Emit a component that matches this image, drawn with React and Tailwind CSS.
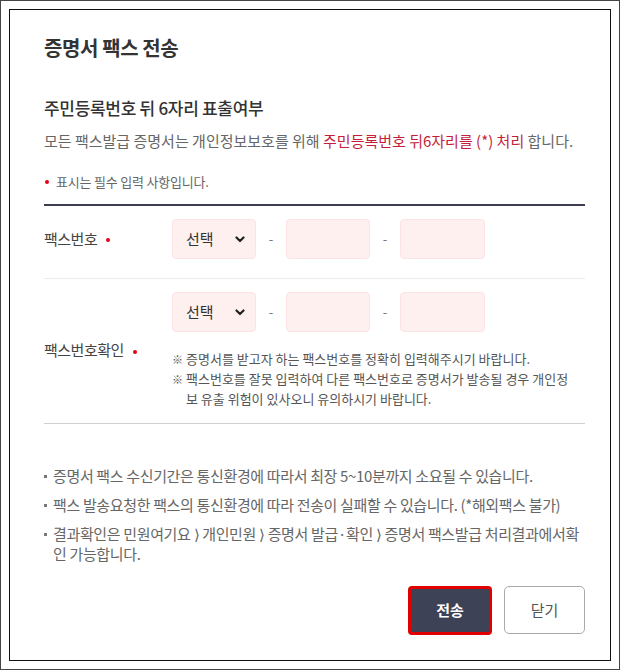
import React from 'react';

const Dot = () => (
  <span className="inline-block w-[4px] h-[4px] rounded-full bg-[#e60012]" />
);

const Chevron = () => (
  <svg width="10" height="7" viewBox="0 0 10 7" fill="none">
    <path d="M1.5 1.5 L5 5 L8.5 1.5" stroke="#222" strokeWidth="2.2" strokeLinecap="round" strokeLinejoin="round" />
  </svg>
);

const PhoneFields = () => (
  <div className="flex items-center">
    <div className="w-[84px] h-[40px] rounded-[4px] bg-[#fff0f0] border border-[#fde3e3] flex items-center justify-between pl-[13px] pr-[10px]">
      <span className="text-[15px] text-[#333]">선택</span>
      <Chevron />
    </div>
    <span className="w-[30px] text-center text-[#777] text-[13px]">-</span>
    <div className="w-[84px] h-[40px] rounded-[4px] bg-[#fff0f0] border border-[#fde3e3]" />
    <span className="w-[30px] text-center text-[#777] text-[13px]">-</span>
    <div className="w-[85px] h-[40px] rounded-[4px] bg-[#fff0f0] border border-[#fde3e3]" />
  </div>
);

const Bullet = ({ children }) => (
  <li className="flex">
    <span className="w-[9px] shrink-0 flex pt-[9px]">
      <span className="w-[3px] h-[3px] bg-[#777]" />
    </span>
    <span>{children}</span>
  </li>
);

const Note = ({ children }) => (
  <div className="flex">
    <span className="w-[14px] shrink-0 text-[11px]">※</span>
    <span className="whitespace-nowrap">{children}</span>
  </div>
);

export default function App() {
  return (
    <div
      className="w-[620px] h-[670px] border border-[#444] p-[8px] bg-white"
      style={{ fontFamily: '"Noto Sans CJK KR", "Noto Sans", sans-serif' }}
    >
      <div className="h-full border border-[#111] pl-[34px] pr-[25px] pt-[24px] flex flex-col">
        <h1 className="text-[20px] font-bold text-[#333] tracking-[-0.4px] leading-[28px]">증명서 팩스 전송</h1>

        <h2 className="mt-[34px] text-[17px] font-medium text-[#333] tracking-[-0.3px] leading-[24px]">
          주민등록번호 뒤 6자리 표출여부
        </h2>
        <p className="mt-[9px] text-[15px] text-[#666] leading-[24px]">
          모든 팩스발급 증명서는 개인정보보호를 위해{' '}
          <span className="text-[#c41e3a]">주민등록번호 뒤6자리를 (*) 처리</span> 합니다.
        </p>

        <p className="mt-[20px] flex items-center text-[13px] text-[#666] tracking-[-0.2px] leading-[18px]">
          <span className="ml-[1px] mr-[7px] flex"><Dot /></span>
          표시는 필수 입력 사항입니다.
        </p>

        <div className="mt-[13px] border-t-2 border-[#3c3e4f]">
          <div className="flex items-center pt-[13px] pb-[19px] border-b border-[#ececec]">
            <div className="w-[128px] flex items-center text-[15px] text-[#444] tracking-[-0.5px]">
              팩스번호<span className="ml-[9px] flex mt-[2px]"><Dot /></span>
            </div>
            <PhoneFields />
          </div>

          <div className="flex items-center pt-[13px] pb-[14px] border-b border-[#cfcfcf]">
            <div className="w-[128px] flex items-center text-[15px] text-[#444] tracking-[-0.5px]">
              팩스번호확인<span className="ml-[9px] flex mt-[2px]"><Dot /></span>
            </div>
            <div className="flex flex-col">
              <PhoneFields />
              <div className="mt-[17px] text-[13px] text-[#555] leading-[20px]">
                <Note>증명서를 받고자 하는 팩스번호를 정확히 입력해주시기 바랍니다.</Note>
                <Note>
                  팩스번호를 잘못 입력하여 다른 팩스번호로 증명서가 발송될 경우 개인정
                  <br />
                  보 유출 위험이 있사오니 유의하시기 바랍니다.
                </Note>
              </div>
            </div>
          </div>
        </div>

        <ul className="mt-[42px] flex flex-col gap-[9px] text-[15px] text-[#666] tracking-[-0.35px] leading-[20px]">
          <Bullet>증명서 팩스 수신기간은 통신환경에 따라서 최장 5~10분까지 소요될 수 있습니다.</Bullet>
          <Bullet>팩스 발송요청한 팩스의 통신환경에 따라 전송이 실패할 수 있습니다. (*해외팩스 불가)</Bullet>
          <Bullet>
            <span className="whitespace-nowrap">
              결과확인은 민원여기요 ⟩ 개인민원 ⟩ 증명서 발급·확인 ⟩ 증명서 팩스발급 처리결과에서확
            </span>
            <br />
            인 가능합니다.
          </Bullet>
        </ul>

        <div className="mt-[22px] flex justify-end gap-[12px]">
          <button className="w-[84px] h-[49px] rounded-[4px] border-[3px] border-[#e00000] bg-[#3e4257] text-white text-[15px] font-bold">
            전송
          </button>
          <button className="w-[81px] h-[48px] rounded-[5px] border border-[#aaa] bg-white text-[#555] text-[15px]">
            닫기
          </button>
        </div>
      </div>
    </div>
  );
}
